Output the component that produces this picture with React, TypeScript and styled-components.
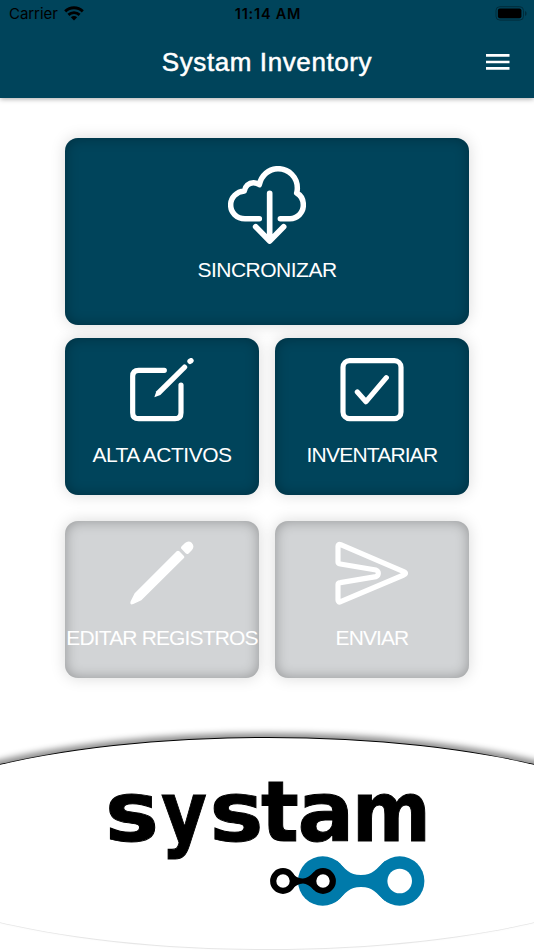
import React from "react";
import styled, { createGlobalStyle } from "styled-components";

const GlobalStyle = createGlobalStyle`
  * { box-sizing: border-box; }
  body { margin: 0; background: #fff; font-family: "Liberation Sans", Arial, sans-serif; }
`;

const Screen = styled.div`
  width: 100%;
  height: 950px;
  display: flex;
  flex-direction: column;
  overflow: hidden;
  background: #fff;
`;

const Header = styled.header`
  height: 98px;
  flex: none;
  background: #00445b;
  box-shadow: 0 1px 5px rgba(0, 0, 0, 0.35);
`;

const StatusBar = styled.div`
  height: 27px;
  padding: 0 7px 0 9px;
  display: grid;
  grid-template-columns: 1fr auto 1fr;
  align-items: center;
  font-family: Inter, sans-serif;
  font-size: 15px;
  color: #000;
`;

const Carrier = styled.div`
  display: flex;
  align-items: center;
  gap: 6px;
  letter-spacing: -0.05px;
`;

const Clock = styled.div`
  font-weight: 600;
  font-size: 14.5px;
  letter-spacing: 0.75px;
`;

const Battery = styled.div`
  display: flex;
  justify-content: flex-end;
`;

const TitleBar = styled.div`
  height: 70px;
  padding: 0 24px;
  display: grid;
  grid-template-columns: 24px 1fr 24px;
  align-items: center;
`;

const Title = styled.h1`
  grid-column: 2;
  margin: 0;
  text-align: center;
  font-size: 26px;
  font-weight: 400;
  line-height: 30px;
  color: #fff;
  letter-spacing: 0.6px;
  -webkit-text-stroke: 0.5px #fff;
`;

const MenuButton = styled.button`
  display: flex;
  padding: 0;
  border: 0;
  background: none;
`;

const Menu = styled.main`
  width: 404px;
  margin: 40px auto 0;
  flex: none;
  display: grid;
  grid-template-columns: 194px 194px;
  column-gap: 16px;
`;

const Tile = styled.button<{ $wide?: boolean; $disabled?: boolean; $gap?: number }>`
  grid-column: ${(p) => (p.$wide ? "1 / -1" : "auto")};
  margin: ${(p) => p.$gap ?? 0}px 0 0;
  height: ${(p) => (p.$wide ? 187 : 157)}px;
  padding: ${(p) => (p.$wide ? 28 : 20)}px 0 0;
  border: 0;
  border-radius: 13px;
  display: flex;
  flex-direction: column;
  align-items: center;
  color: #fff;
  background: ${(p) => (p.$disabled ? "#d2d4d6" : "#00445b")};
  box-shadow: 0 0 15px rgba(0, 0, 0, 0.15), inset 0 0 13px rgba(0, 0, 0, 0.3);
`;

const Label = styled.span<{ $top: number; $spacing: number }>`
  margin-top: ${(p) => p.$top}px;
  font-family: "Liberation Sans", Arial, sans-serif;
  font-size: 21px;
  line-height: 24px;
  white-space: nowrap;
  letter-spacing: ${(p) => p.$spacing}px;
`;

const Footer = styled.footer`
  width: 802px;
  height: 213px;
  margin: auto 0 0;
  align-self: center;
  flex: none;
  display: flex;
  justify-content: center;
  padding-top: 18px;
  border-radius: 50%;
  border-top: 1.5px solid #000;
  border-bottom: 1px solid #e6e6e6;
  background: #fff;
  box-shadow: 0 -5px 6px -1px rgba(0, 0, 0, 0.45);
`;

const stroke = {
  fill: "none",
  stroke: "currentColor",
  strokeWidth: 15.5,
  strokeLinecap: "round" as const,
  strokeLinejoin: "round" as const,
};

const WifiIcon = () => (
  <svg width="20" height="15" viewBox="0 0 20 15">
    <g fill="none" stroke="#000" strokeWidth="2.9">
      <path d="M1.2 5.4C6.2.5 13.8.5 18.8 5.4" />
      <path d="M4.4 8.9c3.2-3 8-3 11.2 0" />
    </g>
    <path d="M10 14.5 6.8 11.2c1.8-1.6 4.6-1.6 6.4 0Z" />
  </svg>
);

const BatteryIcon = () => (
  <svg width="32" height="15" viewBox="0 0 32 15">
    <rect x="1" y=".7" width="27.5" height="13.4" rx="3.8" fill="none" stroke="#002c3b" strokeWidth="1" />
    <rect x="2.900" y="2.6" width="23.5" height="9.6" rx="2" />
    <path d="M30 5.1c2.1.7 2.1 4 0 4.8Z" fill="#002c3b" />
  </svg>
);

const MenuIcon = () => (
  <svg width="24" height="18" viewBox="0 0 24 18">
    <path d="M0 2.4h23.5M0 9h23.5M0 15.4h23.5" stroke="#fff" strokeWidth="2.6" />
  </svg>
);

const CloudDownload = () => (
  <svg width="78" height="78" viewBox="114 48 234 234">
    <g {...stroke}>
      <path d="M208 206H165C140 206 122 188 122 165C122 142 140 125 163 123C165 108 177 98 190 98C198 98 203 100 208 104C214 76 237 56 264 56C297 56 322 82 322 114Q322 124 320 129C333 136 340 150 340 165C340 188 322 206 300 206H271" strokeWidth="16.5" />
      <path d="M239 130V272M197 230l42 43 42-43" strokeWidth="17" />
    </g>
  </svg>
);

const Compose = () => (
  <svg width="64" height="64" viewBox="240 144 192 192">
    <path {...stroke} d="M343 181H266Q248 181 248 199V308Q248 326 266 326H375Q393 326 393 308V225" />
    <path fill="currentColor" d="M313 262l6-18L400 164Q404 161 408 165L411 168Q414 172 410 176L331 255Z" />
    <path {...stroke} strokeWidth="16" d="M420 154l3-2" />
  </svg>
);

const CheckSquare = () => (
  <svg width="64" height="64" viewBox="225 144 192 192">
    <rect {...stroke} x="234" y="152" width="174" height="174" rx="20" />
    <path {...stroke} d="M277 246l26 29 61-72" />
  </svg>
);

const Pencil = () => (
  <svg width="64" height="64" viewBox="240 108 192 192">
    <path fill="currentColor" d="M380 139Q384 135 388 139L401 152Q405 156 401 160L274 286L250 297Q238 302 242 289L254 265Z" />
    <path fill="currentColor" d="M395 132Q391 128 395 124L405 114Q415 105 425 113Q435 124 426 135L415 146Q411 149 407 145Z" />
  </svg>
);

const Send = () => (
  <svg width="74" height="64" viewBox="210 107 222 192">
    <path {...stroke} d="M219 123Q219 115 227 118L416 199Q427 204 416 209L227 289Q219 293 219 284V238Q219 233 226 232L333 214Q340 211 340 204Q340 197 333 194L226 176Q219 175 219 170Z" />
  </svg>
);

const Letter = styled.text`
  font-family: "DejaVu Sans", sans-serif;
  font-weight: 700;
  font-size: 84px;
  fill: #000;
  stroke: #000;
  stroke-width: 1px;
`;

const wordmark = [
  { char: "s", x: 105, scale: 1.08 },
  { char: "y", x: 161, scale: 0.84 },
  { char: "s", x: 209.5, scale: 1.08 },
  { char: "t", x: 261, scale: 0.94 },
  { char: "a", x: 297.5, scale: 1 },
  { char: "m", x: 352, scale: 0.9 },
];

const Logo = () => (
  <svg width="350" height="160" viewBox="92 756 350 160" role="img" aria-label="systam">
    {wordmark.map(({ char, x, scale }) => (
      <Letter key={x} transform={`translate(${x} 841) scale(${scale} 1)`}>
        {char}
      </Letter>
    ))}
    <g fill="#007aaa">
      <circle cx="322.7" cy="881" r="24.7" />
      <circle cx="399.7" cy="881" r="24.7" />
      <path d="M337 861C346 869 349 875 361 875S376 869 385 861V901C376 893 373 887 361 887S346 893 337 901Z" />
    </g>
    <circle cx="399.7" cy="881" r="12.3" fill="#fff" />
    <path d="M291 872Q297 879 303 878.5Q308 878 314 872V890Q308 883.5 303 883.5Q297 883.5 291 890Z" />
    <g fill="#fff" stroke="#000" strokeWidth="6.2">
      <circle cx="283" cy="881" r="9.8" />
      <circle cx="323" cy="881" r="9.8" />
    </g>
  </svg>
);

export default function App() {
  return (
    <>
      <GlobalStyle />
      <Screen>
        <Header>
          <StatusBar>
            <Carrier>Carrier <WifiIcon /></Carrier>
            <Clock>11:14 AM</Clock>
            <Battery><BatteryIcon /></Battery>
          </StatusBar>
          <TitleBar>
            <Title>Systam Inventory</Title>
            <MenuButton aria-label="Menu"><MenuIcon /></MenuButton>
          </TitleBar>
        </Header>
        <Menu>
          <Tile $wide>
            <CloudDownload />
            <Label $top={14} $spacing={-0.5}>SINCRONIZAR</Label>
          </Tile>
          <Tile $gap={13}>
            <Compose />
            <Label $top={21} $spacing={-0.5}>ALTA ACTIVOS</Label>
          </Tile>
          <Tile $gap={13}>
            <CheckSquare />
            <Label $top={21} $spacing={-0.8}>INVENTARIAR</Label>
          </Tile>
          <Tile $disabled $gap={26}>
            <Pencil />
            <Label $top={21} $spacing={-0.85}>EDITAR REGISTROS</Label>
          </Tile>
          <Tile $disabled $gap={26}>
            <Send />
            <Label $top={21} $spacing={-0.9}>ENVIAR</Label>
          </Tile>
        </Menu>
        <Footer><Logo /></Footer>
      </Screen>
    </>
  );
}
